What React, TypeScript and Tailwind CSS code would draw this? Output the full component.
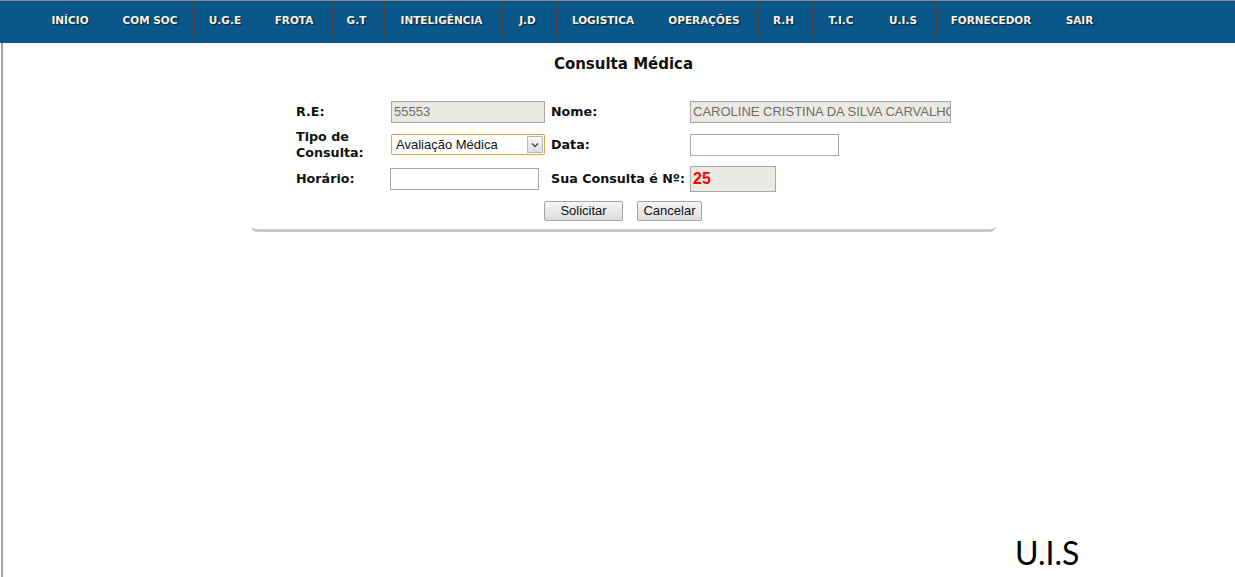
import React from "react";

const menu = [
  { label: "INÍCIO", w: "w-[75px]" },
  { label: "COM SOC", w: "w-[85px]" },
  { label: "U.G.E", w: "w-[65px]" },
  { label: "FROTA", w: "w-[73px]" },
  { label: "G.T", w: "w-[52px]" },
  { label: "INTELIGÊNCIA", w: "w-[118px]" },
  { label: "J.D", w: "w-[54px]" },
  { label: "LOGISTICA", w: "w-[97px]" },
  { label: "OPERAÇÕES", w: "w-[105px]" },
  { label: "R.H", w: "w-[54px]" },
  { label: "T.I.C", w: "w-[61px]" },
  { label: "U.I.S", w: "w-[63px]" },
  { label: "FORNECEDOR", w: "w-[113px]" },
  { label: "SAIR", w: "w-[64px]" },
];

const label = "font-['DejaVu_Sans',Verdana,sans-serif] font-bold text-[12.7px] text-[#111] leading-[16px]";
const field =
  "h-[22px] border border-[#a9a9a9] px-[2px] font-['Liberation_Sans',Arial,sans-serif] text-[13px] leading-[20px] overflow-hidden whitespace-nowrap";

export default function App() {
  return (
    <div className="w-[1235px] h-[577px] bg-white overflow-hidden">
      {/* top menu */}
      <div className="h-[43px] border-t border-[#8a8a8a] bg-[#09568a] flex pl-[35px]">
        {menu.map((m) => (
          <div key={m.label} className={`${m.w} h-[42px] flex items-start`}>
            <div className="flex-1 h-[36px] mt-[2px] flex items-center justify-center pr-[4px] font-['DejaVu_Sans',Verdana,sans-serif] font-bold text-[10.5px] text-[#f2f2f2] [text-shadow:1px_1px_1px_#1a1a1a]">
              {m.label}
            </div>
            <div className="w-px h-[36px] mt-[1px] bg-[#4f4538]" />
          </div>
        ))}
      </div>

      {/* page body */}
      <div className="ml-px h-[534px] border-l-2 border-[#a3a3a3] flex flex-col">
        <div className="ml-[248px] w-[745px] h-[189px] border-b-[3px] border-[#c8c8c8] rounded-b-[6px] flex flex-col">
          <h1 className="mt-[11px] text-center font-['DejaVu_Sans',Verdana,sans-serif] font-bold text-[15px] leading-[20px] text-[#111]">
            Consulta Médica
          </h1>

          <div className="mt-[27px] pl-[45px] flex flex-col">
            {/* row 1 */}
            <div className="h-[22px] flex items-center">
              <div className={`${label} w-[95px]`}>R.E:</div>
              <div className={`${field} w-[154px] bg-[#ebe9e4] text-[#6d6d6d]`}>55553</div>
              <div className={`${label} w-[145px] pl-[6px]`}>Nome:</div>
              <div className={`${field} w-[261px] bg-[#ebe9e4] text-[#6d6d6d]`}>
                CAROLINE CRISTINA DA SILVA CARVALHO
              </div>
            </div>

            {/* row 2 */}
            <div className="mt-[5px] h-[33px] flex items-center">
              <div className={`${label} w-[95px]`}>
                Tipo de
                <br />
                Consulta:
              </div>
              <div className="w-[154px] h-[21px] border border-[#e0a852] rounded-[2px] bg-white flex items-center pl-[4px] pr-[1px] font-['Liberation_Sans',Arial,sans-serif] text-[13px] text-[#111] shadow-[0_0_1px_#f0c070]">
                <span className="flex-1">Avaliação Médica</span>
                <span className="w-[16px] h-[17px] border border-[#b8b8b8] bg-gradient-to-b from-[#f7f7f7] to-[#dedede] flex items-center justify-center">
                  <svg width="8" height="6" viewBox="0 0 8 6">
                    <path d="M1 1.5 L4 4.5 L7 1.5" stroke="#4a4a4a" strokeWidth="1.4" fill="none" />
                  </svg>
                </span>
              </div>
              <div className={`${label} w-[145px] pl-[6px]`}>Data:</div>
              <div className={`${field} w-[149px] bg-white`} />
            </div>

            {/* row 3 */}
            <div className="mt-[4px] h-[28px] flex items-center">
              <div className={`${label} w-[94px]`}>Horário:</div>
              <div className={`${field} w-[149px] bg-white`} />
              <div className={`${label} w-[151px] pl-[12px] whitespace-nowrap`}>Sua Consulta é Nº:</div>
              <div className="w-[86px] h-[26px] border border-[#a9a9a9] bg-[#ebe9e4] pl-[2px] font-['Liberation_Sans',Arial,sans-serif] font-bold text-[16px] leading-[24px] text-[#ff0000]">
                25
              </div>
            </div>

            {/* buttons */}
            <div className="mt-[8px] h-[20px] flex pl-[248px] gap-[14px]">
              <button className="w-[79px] h-[20px] border border-[#a5a5a5] rounded-[2px] bg-gradient-to-b from-[#f6f6f6] to-[#dddddd] font-['Liberation_Sans',Arial,sans-serif] text-[13px] text-[#111] leading-[18px]">
                Solicitar
              </button>
              <button className="w-[65px] h-[20px] border border-[#a5a5a5] rounded-[2px] bg-gradient-to-b from-[#f6f6f6] to-[#dddddd] font-['Liberation_Sans',Arial,sans-serif] text-[13px] text-[#111] leading-[18px]">
                Cancelar
              </button>
            </div>
          </div>
        </div>

        <div className="mt-auto mb-[5px] pl-[1012px] font-['Lato','Noto_Sans',sans-serif] text-[32px] leading-[38px] text-black">
          U.I.S
        </div>
      </div>
    </div>
  );
}
